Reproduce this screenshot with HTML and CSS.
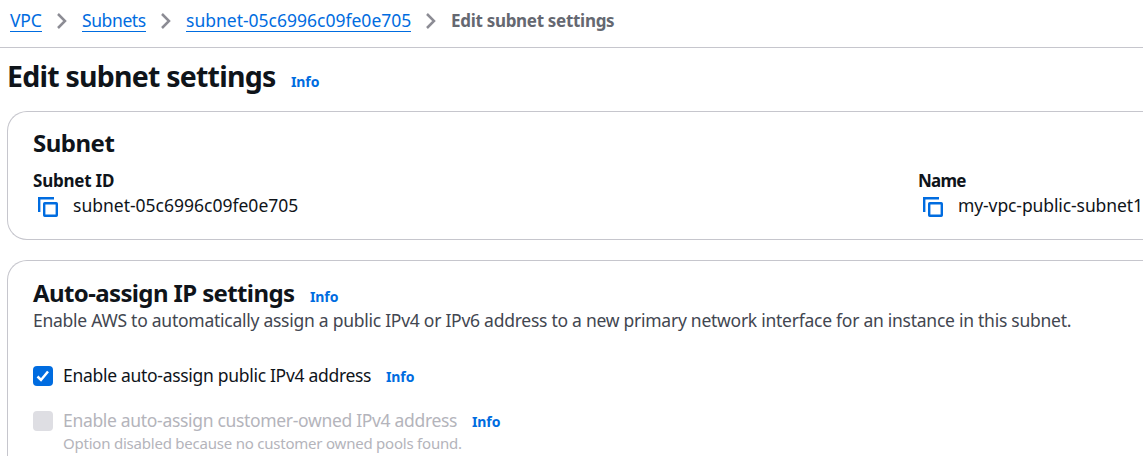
FILE: index.html
```html
<!DOCTYPE html>
<html lang="en">
<head>
<meta charset="utf-8">
<title>Edit subnet settings</title>
<link rel="stylesheet" href="styles.css">
</head>
<body>
<nav class="crumbs">
  <a class="crumb crumb-vpc">VPC</a>
  <svg class="chevron" width="10" height="16" viewBox="0 0 10 16"><path d="M1 1l7 7-7 7"/></svg>
  <a class="crumb crumb-subnets">Subnets</a>
  <svg class="chevron" width="10" height="16" viewBox="0 0 10 16"><path d="M1 1l7 7-7 7"/></svg>
  <a class="crumb crumb-id">subnet-05c6996c09fe0e705</a>
  <svg class="chevron" width="10" height="16" viewBox="0 0 10 16"><path d="M1 1l7 7-7 7"/></svg>
  <span class="current">Edit subnet settings</span>
</nav>
<main>
  <header class="page-head"><h1>Edit subnet settings</h1><a class="info">Info</a></header>
  <section class="card subnet">
    <h2>Subnet</h2>
    <div class="fields">
      <div class="field">
        <div class="key key-id">Subnet ID</div>
        <div class="value"><svg class="copy" width="20" height="20" viewBox="0 0 20 20"><path d="M16 1.200H1.200V15"/><rect x="6.200" y="6.200" width="12.600" height="12.600" rx=".5"/></svg><span class="id">subnet-05c6996c09fe0e705</span></div>
      </div>
      <div class="field">
        <div class="key key-name">Name</div>
        <div class="value"><svg class="copy" width="20" height="20" viewBox="0 0 20 20"><path d="M16 1.200H1.200V15"/><rect x="6.200" y="6.200" width="12.600" height="12.600" rx=".5"/></svg><span class="name">my-vpc-public-subnet1</span></div>
      </div>
    </div>
  </section>
  <section class="card assign">
    <header class="card-head"><h2 class="assign-title">Auto-assign IP settings</h2><a class="info">Info</a></header>
    <p class="desc">Enable AWS to automatically assign a public IPv4 or IPv6 address to a new primary network interface for an instance in this subnet.</p>
    <div class="option">
      <span class="box checked"><svg width="20" height="20" viewBox="0 0 20 20"><path d="M4.500 10.500l3.500 3.500 7-8.500"/></svg></span>
      <span class="label label-public">Enable auto-assign public IPv4 address</span><a class="info">Info</a>
    </div>
    <div class="option disabled">
      <span class="box"></span>
      <span class="label label-owned">Enable auto-assign customer-owned IPv4 address</span><a class="info">Info</a>
    </div>
    <p class="hint">Option disabled because no customer owned pools found.</p>
  </section>
</main>
</body>
</html>
```
FILE: styles.css
```css
* { box-sizing: border-box; }
html { overflow: hidden; }
body {
  margin: 0;
  height: 456px;
  overflow: hidden;
  background: #fff;
  color: #0f141a;
  font: 17.5px/25px "Noto Sans", sans-serif;
}
h1, h2, p { margin: 0; }
svg { flex: none; fill: none; }
span, a, h1, h2, p, .key { white-space: nowrap; }
.crumbs {
  display: flex;
  align-items: center;
  height: 48px;
  padding: 0 0 6px 10px;
  border-bottom: 1px solid #c6c6cd;
}
.crumb { height: 22px; line-height: 21px; color: #006ce0; border-bottom: 1px solid #006ce0; }
.crumb-vpc { width: 32px; letter-spacing: -0.2px; }
.crumb-subnets { width: 64px; letter-spacing: -0.4px; }
.crumb-id { width: 225px; }
.chevron { width: 10px; margin: 0 15px; stroke: #8c8c94; stroke-width: 2.5; }
.current { font-size: 17px; font-weight: 700; color: #656871; letter-spacing: -0.3px; }
.page-head { display: flex; align-items: baseline; height: 63px; padding: 8px 0 0 7px; }
h1 { width: 284px; font-size: 28.5px; line-height: 40px; font-weight: 700; letter-spacing: -0.77px; }
.info { color: #006ce0; font-size: 14px; line-height: 20px; font-weight: 700; letter-spacing: -0.1px; }
.card { width: 1136px; margin-left: 7px; padding-left: 25px; border: 1px solid #c6c6cd; border-right: 0; border-radius: 20px 0 0 20px; }
.subnet { height: 129px; padding-top: 16px; }
h2 { font-size: 24px; line-height: 30px; font-weight: 700; letter-spacing: -0.5px; }
.fields { display: grid; grid-template-columns: 885px 1fr; margin-top: 10px; }
.key { font-size: 17px; font-weight: 700; line-height: 25px; letter-spacing: -0.23px; }
.key-name { letter-spacing: -0.8px; }
.value { display: flex; align-items: center; height: 25px; }
.copy { margin: 2px 15px 0 5px; stroke: #006ce0; stroke-width: 2.4; }
.name { letter-spacing: -0.1px; }
.assign { height: 196px; margin-top: 20px; padding-top: 17px; border-bottom: 0; border-bottom-left-radius: 0; }
.card-head { display: flex; align-items: baseline; height: 30px; }
.assign-title { width: 277px; letter-spacing: -0.62px; }
.desc { color: #424650; line-height: 25px; letter-spacing: -0.26px; }
.option { display: flex; align-items: center; height: 25px; margin-top: 30px; }
.option .info { position: relative; top: 1px; }
.box { width: 20px; height: 20px; margin-right: 10px; border-radius: 4px; background: #dedee3; }
.checked { background: #006ce0; }
.checked svg { display: block; stroke: #fff; stroke-width: 2.5; }
.label-public { width: 323px; letter-spacing: -0.3px; }
.label-owned { width: 409px; letter-spacing: -0.32px; }
.disabled { margin-top: 20px; }
.disabled .label, .hint { color: #b4b4bb; }
.hint { padding-left: 30px; font-size: 15px; line-height: 20px; letter-spacing: -0.22px; }
```
